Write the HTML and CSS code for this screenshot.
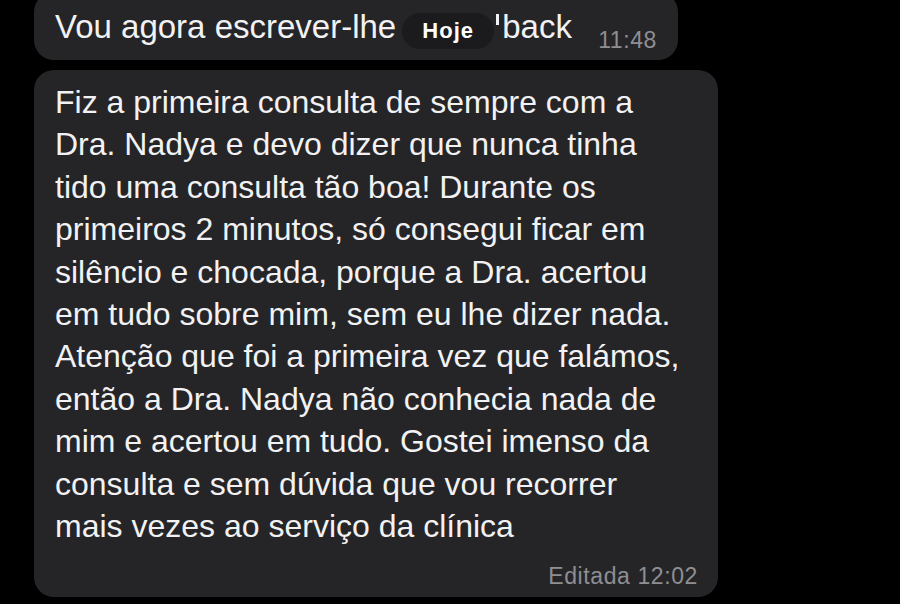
FILE: index.html
```html
<!DOCTYPE html>
<html lang="pt">
<head>
<meta charset="utf-8">
<link rel="stylesheet" href="styles.css">
</head>
<body>
<div class="chat">
  <div class="bubble short">
    <span class="msg">Vou agora escrever-lhe</span>
    <span class="day">Hoje</span>
    <span class="msg rest">back</span>
    <span class="time">11:48</span>
  </div>
  <div class="bubble long">
    <p class="msg">Fiz a primeira consulta de sempre com a<br>Dra. Nadya e devo dizer que nunca tinha<br>tido uma consulta tão boa! Durante os<br>primeiros 2 minutos, só consegui ficar em<br>silêncio e chocada, porque a Dra. acertou<br>em tudo sobre mim, sem eu lhe dizer nada.<br>Atenção que foi a primeira vez que falámos,<br>então a Dra. Nadya não conhecia nada de<br>mim e acertou em tudo. Gostei imenso da<br>consulta e sem dúvida que vou recorrer<br>mais vezes ao serviço da clínica</p>
    <div class="meta">Editada 12:02</div>
  </div>
</div>
</body>
</html>
```

FILE: styles.css
```css
html, body {
  margin: 0;
  padding: 0;
  background: #000;
  height: 100%;
  overflow: hidden;
}
body {
  font-family: "Liberation Sans", Arial, sans-serif;
  color: #f2f2f4;
}
.chat {
  display: flex;
  flex-direction: column;
  align-items: flex-start;
  gap: 10px;
  padding-left: 34px;
  margin-top: -8px;
}
.bubble {
  background: #252527;
  border-radius: 20px;
  box-sizing: border-box;
}
.short {
  width: 644px;
  height: 68px;
  display: flex;
  align-items: flex-start;
  padding: 14px 21px 0 21px;
}
.short .msg {
  font-size: 33px;
  line-height: 42px;
  white-space: nowrap;
}
.rest {
  margin-left: 2px;
}
.rest::before {
  content: "";
  display: inline-block;
  width: 3px;
  height: 11px;
  margin-top: 6px;
  margin-right: 3px;
  background: #f2f2f4;
  vertical-align: text-top;
}
.day {
  margin-left: 6px;
  margin-top: 7px;
  width: 92px;
  height: 36px;
  border-radius: 18px;
  background: #1b1b1d;
  color: #fff;
  font-weight: bold;
  font-size: 22px;
  letter-spacing: 1px;
  display: flex;
  align-items: center;
  justify-content: center;
}
.short .time {
  margin-left: auto;
  align-self: flex-end;
  margin-bottom: 8px;
  font-size: 23px;
  line-height: 23px;
  letter-spacing: 0.6px;
  color: #8e8e93;
}
.long {
  width: 684px;
  padding: 11px 20px 9px 21px;
  display: flex;
  flex-direction: column;
}
.long .msg {
  margin: 0;
  font-size: 32px;
  line-height: 42.4px;
}
.meta {
  align-self: flex-end;
  margin-top: 18px;
  font-size: 23px;
  line-height: 23px;
  letter-spacing: 0.6px;
  color: #8e8e93;
}
```
